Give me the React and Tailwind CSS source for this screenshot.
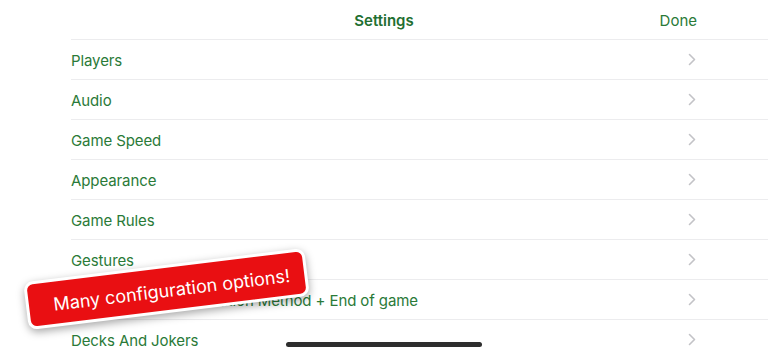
import React from "react";

const rows = [
  "Players",
  "Audio",
  "Game Speed",
  "Appearance",
  "Game Rules",
  "Gestures",
  "Scoring Rules: Calculation Method + End of game",
  "Decks And Jokers",
];

const Chevron = () => (
  <svg width="8" height="13" viewBox="0 0 8 13" fill="none">
    <polyline points="1.5,1.5 6.5,6.5 1.5,11.5" stroke="#c3c3c7" strokeWidth="1.6" strokeLinecap="round" strokeLinejoin="round" />
  </svg>
);

export default function App() {
  return (
    <div
      className="relative h-[355px] w-[768px] overflow-hidden bg-white"
      style={{ fontFamily: "Inter, 'Liberation Sans', sans-serif" }}
    >
      {/* Nav bar */}
      <div className="relative flex h-[39px] items-center justify-end pr-[71px] pt-[3px]">
        <div className="absolute left-0 right-0 text-center text-[15px] font-semibold text-[#226f31]">Settings</div>
        <div className="text-[15px] text-[#2a7a38]">Done</div>
      </div>

      {/* List */}
      <div className="ml-[71px]">
        {rows.map((r, i) => (
          <div key={i} className="flex h-[40px] items-center justify-between border-t border-[#ececee] pr-[72px]">
            <span className="pt-[3px] text-[15px] tracking-[-0.1px] text-[#2a7a38]">{r}</span>
            <Chevron />
          </div>
        ))}
      </div>

      {/* Badge */}
      <div className="absolute left-[25px] top-[265px] flex h-[48px] w-[283px] -rotate-[7deg] items-center justify-center rounded-[9px] border-[3px] border-white bg-[#e90f12] pl-[10px] pt-[2px] shadow-[0_3px_8px_rgba(0,0,0,0.35)]">
        <span className="text-[18px] text-white">Many configuration options!</span>
      </div>

      {/* Home indicator */}
      <div className="absolute left-[286px] top-[342px] h-[5px] w-[196px] rounded-full bg-[#2e2e2e]" />
    </div>
  );
}
